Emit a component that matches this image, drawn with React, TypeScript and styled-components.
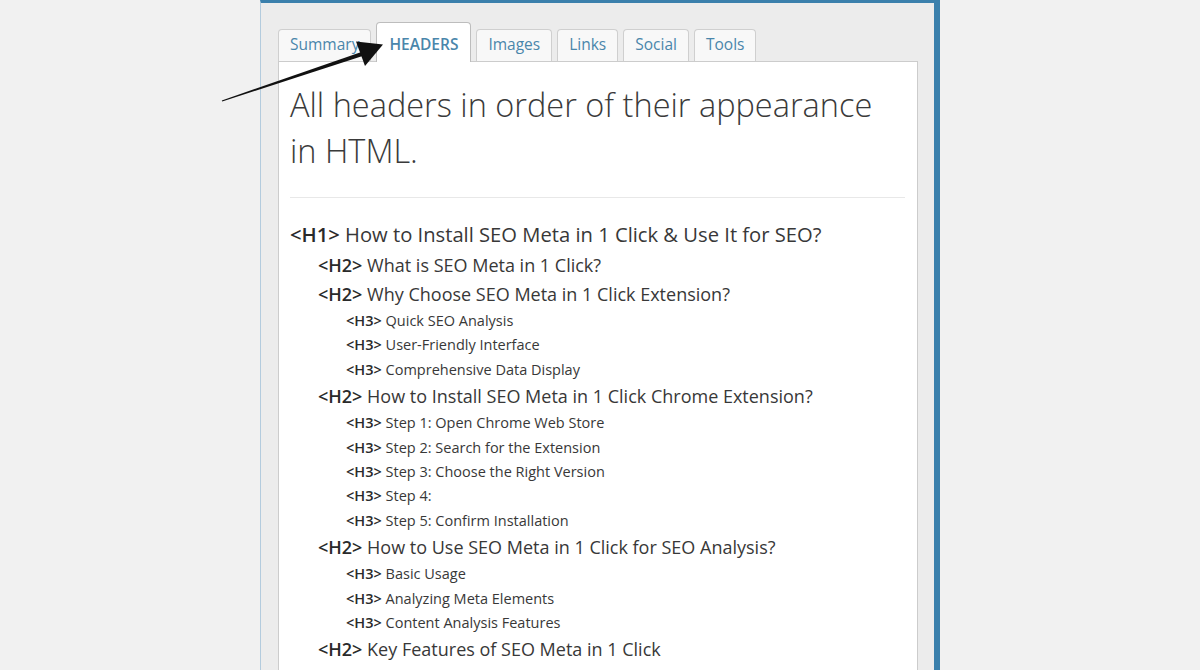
import React from 'react'
import styled, { createGlobalStyle } from 'styled-components'

const GlobalStyle = createGlobalStyle`
    body {
        margin: 0;
        background: #f1f1f1;
        font-family: "Open Sans", "DejaVu Sans", sans-serif;
    }
`

interface TabProps {
    $active?: boolean
}

interface ItemProps {
    $level: number
}

const Page = styled.div`
    position: relative;
    width: 1200px;
    height: 670px;
    overflow: hidden;
    background: #f1f1f1;
`

const Panel = styled.div`
    box-sizing: border-box;
    display: flex;
    flex-direction: column;
    margin-left: 260px;
    width: 680px;
    height: 670px;
    padding: 19px 16px 0 17px;
    background: #ececec;
    border-top: 3px solid #3b80ac;
    border-left: 1px solid #b3cbdd;
    border-right: 6px solid #3b80ac;
`

const TabBar = styled.div`
    position: relative;
    z-index: 1;
    display: flex;
    align-items: flex-end;
    gap: 5px;
    margin-bottom: -1px;
`

const Tab = styled.div`
    box-sizing: border-box;
    display: flex;
    align-items: center;
    height: ${(p: TabProps) => p.$active ? '40px' : '32px'};
    margin-bottom: ${(p: TabProps) => p.$active ? '0' : '1px'};
    padding: ${(p: TabProps) => p.$active ? '3px 12px 0' : '0 11px 3px'};
    background: ${(p: TabProps) => p.$active ? '#ffffff' : '#f8f8f8'};
    border: 1px solid ${(p: TabProps) => p.$active ? '#bdbdbd' : '#cfcfcf'};
    border-bottom: none;
    border-radius: 4px 4px 0 0;
    color: #4a86ab;
    font-size: 15.5px;
    font-weight: ${(p: TabProps) => p.$active ? 600 : 400};
    text-transform: ${(p: TabProps) => p.$active ? 'uppercase' : 'none'};
`

const Content = styled.div`
    flex: 1;
    padding: 0 12px 0 11px;
    background: #ffffff;
    border: 1px solid #cccccc;
`

const Title = styled.h1`
    margin: 20px 0 0;
    padding-right: 20px;
    font-size: 32.5px;
    font-weight: 300;
    line-height: 46px;
    color: #3a3a3a;
`

const Divider = styled.hr`
    margin: 23px 0 20px;
    border: none;
    border-top: 1px solid #e8e8e8;
`

const HeaderList = styled.ul`
    margin: 0;
    padding: 0;
    list-style: none;
`

const sizes: Record<number, [number, number]> = {
    1: [20.2, 33],
    2: [18, 29],
    3: [14.5, 24.4],
}

const Item = styled.li`
    padding-left: ${(p: ItemProps) => (p.$level - 1) * 28}px;
    font-size: ${(p: ItemProps) => sizes[p.$level][0]}px;
    line-height: ${(p: ItemProps) => sizes[p.$level][1]}px;
    color: #383838;
    white-space: nowrap;
`

const Tag = styled.span`
    font-weight: 600;
    color: #2a2a2a;
`

const Arrow = styled.svg`
    position: absolute;
    top: 0;
    left: 0;
    z-index: 5;
    pointer-events: none;
`

const tabs = ['Summary', 'Headers', 'Images', 'Links', 'Social', 'Tools']

const headers: [number, string][] = [
    [1, 'How to Install SEO Meta in 1 Click & Use It for SEO?'],
    [2, 'What is SEO Meta in 1 Click?'],
    [2, 'Why Choose SEO Meta in 1 Click Extension?'],
    [3, 'Quick SEO Analysis'],
    [3, 'User-Friendly Interface'],
    [3, 'Comprehensive Data Display'],
    [2, 'How to Install SEO Meta in 1 Click Chrome Extension?'],
    [3, 'Step 1: Open Chrome Web Store'],
    [3, 'Step 2: Search for the Extension'],
    [3, 'Step 3: Choose the Right Version'],
    [3, 'Step 4:'],
    [3, 'Step 5: Confirm Installation'],
    [2, 'How to Use SEO Meta in 1 Click for SEO Analysis?'],
    [3, 'Basic Usage'],
    [3, 'Analyzing Meta Elements'],
    [3, 'Content Analysis Features'],
    [2, 'Key Features of SEO Meta in 1 Click'],
    [3, 'Meta Tag Insights'],
]

const App = () => {
    return (
        <Page>
            <GlobalStyle/>
            <Panel>
                <TabBar>
                    {tabs.map(t => <Tab key={t} $active={t === 'Headers'}>{t}</Tab>)}
                </TabBar>
                <Content>
                    <Title>All headers in order of their appearance in HTML.</Title>
                    <Divider/>
                    <HeaderList>
                        {headers.map(([level, text], i) => (
                            <Item key={i} $level={level}>
                                <Tag>{`<H${level}>`}</Tag> {text}
                            </Item>
                        ))}
                    </HeaderList>
                </Content>
            </Panel>
            <Arrow width="1200" height="670" viewBox="0 0 1200 670">
                <polygon points="221.8,100.4 361.4,52.1 362.6,55.9 222.2,101.6" fill="#111"/>
                <polygon points="356,41.5 383,44.5 365,66" fill="#111"/>
            </Arrow>
        </Page>
    )
}

export default App
